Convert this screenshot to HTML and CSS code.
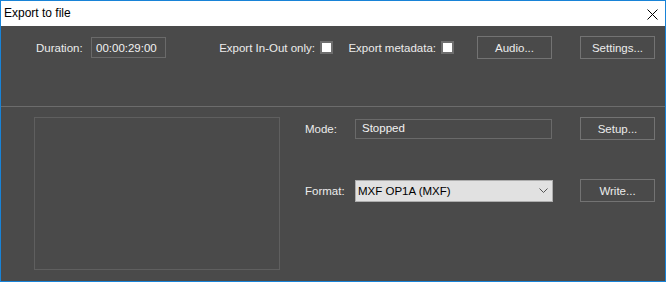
FILE: index.html
```html
<!DOCTYPE html>
<html lang="en">
<head>
    <meta charset="UTF-8">
    <title>Export to file</title>
    <link rel="stylesheet" href="styles.css">
</head>
<body>
    <div class="window">
        <div class="titlebar">
            <span class="title">Export to file</span>
            <svg class="close" width="11" height="11" viewBox="0 0 11 11">
                <path d="M0.5 0.5 L10.5 10.5 M10.5 0.5 L0.5 10.5" stroke="#000" stroke-width="1" fill="none"/>
            </svg>
        </div>

        <div class="content">
            <div class="top-row">
                <span class="lbl">Duration:</span>
                <div class="field duration">00:00:29:00</div>
                <div class="check-group">
                    <span class="lbl">Export In-Out only:</span>
                    <span class="checkbox"></span>
                </div>
                <div class="check-group">
                    <span class="lbl">Export metadata:</span>
                    <span class="checkbox"></span>
                </div>
                <span></span>
                <button class="btn">Audio...</button>
                <span></span>
                <button class="btn">Settings...</button>
            </div>

            <div class="separator"></div>

            <div class="bottom">
                <div class="preview"></div>
                <div class="controls">
                    <span class="lbl">Mode:</span>
                    <div class="field mode">Stopped</div>
                    <span></span>
                    <button class="btn">Setup...</button>

                    <span class="lbl">Format:</span>
                    <div class="select">
                        <span>MXF OP1A (MXF)</span>
                        <svg width="9" height="5" viewBox="0 0 9 5">
                            <path d="M0.5 0.5 L4.5 4.5 L8.5 0.5" stroke="#555" stroke-width="1" fill="none"/>
                        </svg>
                    </div>
                    <span></span>
                    <button class="btn">Write...</button>
                </div>
            </div>
        </div>
    </div>
</body>
</html>
```

FILE: styles.css
```css
body {
    margin: 0;
    background: #fff;
    font-family: "Liberation Sans", Arial, sans-serif;
    font-size: 11.5px;
}
.window {
    width: 666px;
    height: 282px;
    box-sizing: border-box;
    border: 1px solid #1883d7;
    display: flex;
    flex-direction: column;
}
.titlebar {
    height: 25px;
    background: #fff;
    display: flex;
    align-items: center;
    justify-content: space-between;
    padding: 0 7px 0 3px;
}
.title {
    font-size: 12px;
    color: #000;
    line-height: 25px;
}
.close {
    margin-top: 2px;
}
.content {
    flex: 1;
    background: #4a4a4a;
    color: #ececec;
}
.top-row {
    display: grid;
    grid-template-columns: 55px 75px 167px 121px 23px 75px 28px 75px;
    grid-template-rows: 23px;
    align-items: center;
    padding: 10px 0 0 35px;
    height: 70px;
}
.lbl {
    white-space: nowrap;
}
.field {
    box-sizing: border-box;
    border: 1px solid #6a6a6a;
    display: flex;
    align-items: center;
    color: #f2f2f2;
}
.duration {
    width: 75px;
    height: 21px;
    padding-left: 4px;
}
.check-group {
    display: flex;
    align-items: center;
    justify-content: flex-end;
    gap: 5px;
}
.checkbox {
    width: 13px;
    height: 13px;
    box-sizing: border-box;
    border: 2px solid #6e6e6e;
    background: #fff;
}
.btn {
    width: 75px;
    height: 23px;
    box-sizing: border-box;
    border: 1px solid #737373;
    background: transparent;
    color: #ececec;
    font-family: inherit;
    font-size: 11.5px;
    padding: 0;
}
.separator {
    height: 1px;
    background: #6c6c6c;
}
.bottom {
    display: flex;
    padding: 10px 0 0 33px;
}
.preview {
    width: 246px;
    height: 153px;
    box-sizing: border-box;
    border: 1px solid #5f5f5f;
}
.controls {
    display: grid;
    grid-template-columns: 50px 198px 27px 75px;
    grid-template-rows: 23px 23px;
    row-gap: 39px;
    align-items: center;
    margin-left: 25px;
}
.mode {
    width: 197px;
    height: 20px;
    padding: 0 0 2px 6px;
}
.select {
    width: 198px;
    height: 22px;
    box-sizing: border-box;
    border: 1px solid #adadad;
    background: #e1e1e1;
    color: #000;
    display: flex;
    align-items: center;
    justify-content: space-between;
    padding: 0 4px 0 2px;
}
```
